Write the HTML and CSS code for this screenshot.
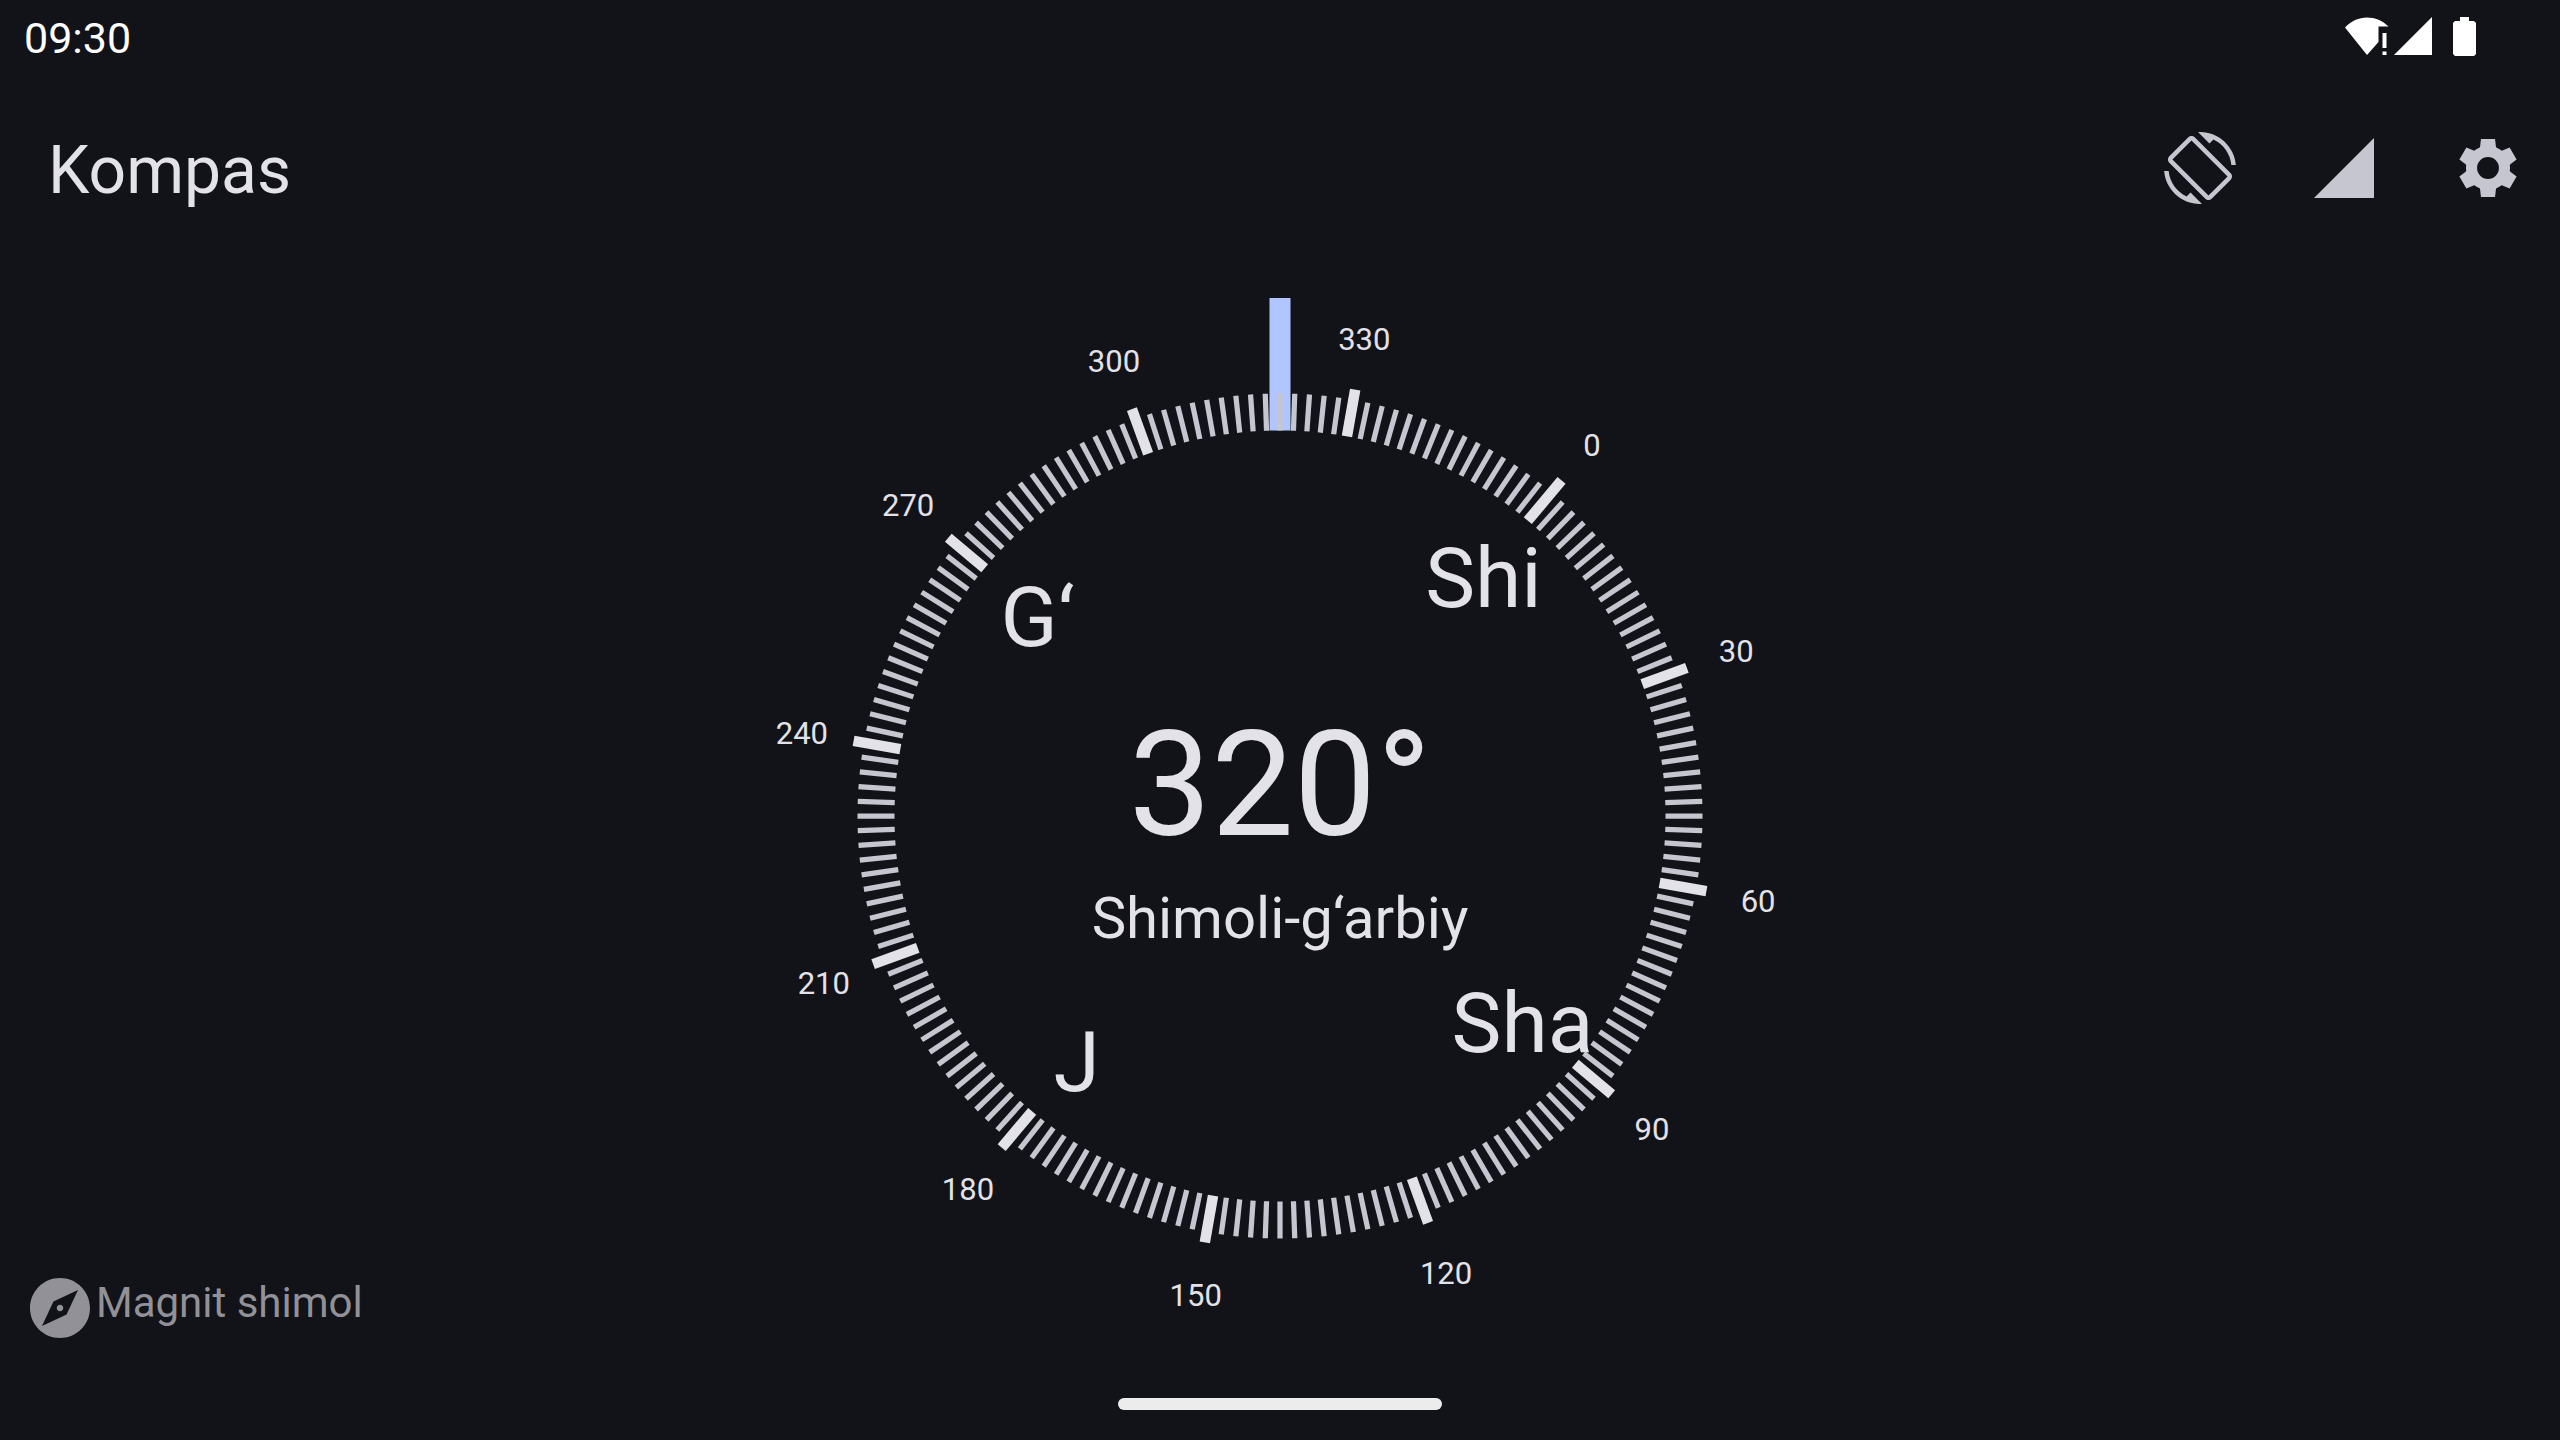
FILE: index.html
```html
<!DOCTYPE html>
<html lang="uz">
<head>
  <meta charset="utf-8">
  <meta name="viewport" content="width=device-width, initial-scale=1">
  <title>Kompas</title>
  <link rel="stylesheet" href="styles.css">
</head>
<body class="screen">
  <div class="status-bar">
    <time class="clock">09:30</time>
    <div class="status-icons">
      <svg class="status-wifi" viewBox="0 0 44 38" aria-hidden="true">
        <path d="M0 10.500C6 4 14 .5 22 .5S37.500 3.500 43.500 9.500H33.500V25L22 38Z"/>
        <path d="M37.500 16h4v15h-4zM37.500 34.500h4v3.500h-4z"/>
      </svg>
      <svg class="status-signal" viewBox="0 0 38 38" aria-hidden="true"><path d="M0 38H38V0Z"/></svg>
      <svg class="status-battery" viewBox="0 0 23 39" aria-hidden="true">
        <path d="M7 0h9v4h5l2 2v31l-2 2H2l-2-2V6l2-2h5z"/>
      </svg>
    </div>
  </div>

  <header class="app-bar">
    <h1 class="title">Kompas</h1>
    <div class="actions">
      <button class="action" type="button" aria-label="Ekranni burish">
        <svg class="icon" viewBox="0 0 24 24" aria-hidden="true">
          <path d="M16.480 2.520c3.270 1.550 5.610 4.720 5.970 8.480h1.500C23.440 4.840 18.290 0 12 0l-.66.03 3.810 3.810 1.330-1.320zm-6.250-.77c-.59-.59-1.540-.59-2.120 0L1.750 8.110c-.59.59-.59 1.540 0 2.120l12.020 12.020c.59.59 1.540.59 2.120 0l6.360-6.360c.59-.59.59-1.540 0-2.120L10.230 1.750zm4.600 19.440L2.810 9.170l6.360-6.360 12.020 12.020-6.360 6.360zm-7.310.29C4.250 19.940 1.910 16.760 1.550 13H.05C.56 19.160 5.710 24 12 24l.66-.03-3.810-3.810-1.330 1.320z"/>
        </svg>
      </button>
      <button class="action" type="button" aria-label="Sensor holati">
        <svg class="icon" viewBox="0 0 24 24" aria-hidden="true"><path d="M2 22h20V2z"/></svg>
      </button>
      <button class="action" type="button" aria-label="Sozlamalar">
        <svg class="icon" viewBox="-12 -12 24 24" aria-hidden="true">
          <defs><path id="tooth" d="M-2.330-9.670H2.330L2.800-6H-2.800Z"/></defs>
          <circle class="gear-body" r="5.500"/>
          <use href="#tooth"/>
          <use href="#tooth" transform="rotate(60)"/>
          <use href="#tooth" transform="rotate(120)"/>
          <use href="#tooth" transform="rotate(180)"/>
          <use href="#tooth" transform="rotate(240)"/>
          <use href="#tooth" transform="rotate(300)"/>
        </svg>
      </button>
    </div>
  </header>

  <main class="compass">
    <p class="north-type">
      <svg class="icon" viewBox="0 0 24 24" aria-hidden="true">
        <path d="M12 10.900c-.61 0-1.100.49-1.100 1.100s.49 1.100 1.100 1.100c.61 0 1.100-.49 1.100-1.100s-.49-1.100-1.100-1.100zM12 2C6.480 2 2 6.480 2 12s4.480 10 10 10 10-4.480 10-10S17.520 2 12 2zm2.190 12.190L6 18l3.810-8.190L18 6l-3.810 8.190z"/>
      </svg>
      <span>Magnit shimol</span>
    </p>
    <svg class="dial" viewBox="-552 -552 1104 1104" data-heading="320">
      <rect class="pointer" x="-10.500" y="-518" width="21" height="132.500"/>
      <g class="rose"></g>
      <text class="degrees" y="19">320°</text>
      <text class="direction" y="122">Shimoli-g‘arbiy</text>
    </svg>
  </main>

  <div class="nav-bar"><span class="nav-handle"></span></div>
  <script src="compass.js"></script>
</body>
</html>
```
FILE: styles.css
```css
* {
  box-sizing: border-box;
}

.screen {
  display: flex;
  flex-direction: column;
  min-height: 100vh;
  margin: 0;
  background: #121318;
  color: #e3e2e9;
  font-family: Roboto, sans-serif;
}

.status-bar {
  display: flex;
  align-items: center;
  justify-content: space-between;
  height: 72px;
  padding: 0 84px 0 24px;
  color: #fff;
}

.clock {
  padding-top: 4px;
  font-size: 43px;
  line-height: 48px;
}

.status-icons {
  display: flex;
  align-items: center;
  fill: currentColor;
}

.status-wifi {
  width: 44px;
  height: 38px;
}

.status-signal {
  width: 38px;
  height: 38px;
  margin-left: 5px;
}

.status-battery {
  width: 23px;
  height: 39px;
  margin-left: 21px;
}

.app-bar {
  display: flex;
  align-items: center;
  justify-content: space-between;
  height: 192px;
  padding-left: 48px;
}

.title {
  margin: 0;
  padding-top: 6px;
  font-size: 66px;
  font-weight: 400;
  line-height: 84px;
}

.actions {
  display: flex;
}

.action {
  display: grid;
  place-items: center;
  width: 144px;
  height: 144px;
  padding: 0;
  border: 0;
  background: none;
  color: #c6c6d0;
}

.icon {
  width: 72px;
  height: 72px;
  fill: currentColor;
}

.gear-body {
  fill: none;
  stroke: currentColor;
  stroke-width: 3.700;
}

.compass {
  display: grid;
  flex: 1;
  grid-template-columns: 1fr auto 1fr;
  min-height: 0;
}

.north-type {
  display: flex;
  align-items: flex-start;
  align-self: end;
  margin: 0;
  padding: 0 0 24px 24px;
  color: #919197;
  font-size: 42px;
  line-height: 62px;
}

.dial {
  width: calc(100vh - 336px);
  height: calc(100vh - 336px);
  overflow: visible;
  fill: #e3e2e9;
  text-anchor: middle;
}

.pointer {
  fill: #b1c5ff;
}

.tick {
  stroke: #c6c6d0;
  stroke-width: 5.250;
}

.tick-major {
  stroke: #e3e2e9;
  stroke-width: 10.500;
}

.mark {
  font-size: 31px;
}

.cardinal {
  font-size: 84px;
}

.degrees {
  font-size: 147px;
}

.direction {
  font-size: 58px;
}

.nav-bar {
  display: grid;
  place-items: center;
  height: 72px;
}

.nav-handle {
  width: 324px;
  height: 12px;
  border-radius: 6px;
  background: #ececec;
}
```
FILE: compass.js
```js
const SVG_NS = 'http://www.w3.org/2000/svg';
const dial = document.querySelector('.dial');
const rose = dial.querySelector('.rose');
const heading = Number(dial.dataset.heading);

const RING_INNER = 385.5;
const RING_OUTER = 422.5;
const MAJOR_OUTER = 433;
const NORTH_OUTER = 438;

function add(name, attributes, text) {
  const node = document.createElementNS(SVG_NS, name);
  for (const [key, value] of Object.entries(attributes)) {
    node.setAttribute(key, value);
  }
  if (text !== undefined) node.textContent = text;
  rose.append(node);
}

function tickEnd(degrees) {
  if (degrees === 0) return NORTH_OUTER;
  return degrees % 30 === 0 ? MAJOR_OUTER : RING_OUTER;
}

// Text stays upright: only its anchor moves round the dial.
function addLabel(className, degrees, radius, baseline, text) {
  const angle = (degrees - heading) * Math.PI / 180;
  add('text', {
    class: className,
    x: radius * Math.sin(angle),
    y: baseline - radius * Math.cos(angle)
  }, text);
}

for (let degrees = 0; degrees < 360; degrees += 2) {
  const major = degrees % 30 === 0;
  add('line', {
    class: major ? 'tick tick-major' : 'tick',
    y1: -RING_INNER,
    y2: -tickEnd(degrees),
    transform: `rotate(${degrees - heading})`
  });
  if (major) addLabel('mark', degrees, 485.5, 12, degrees);
}

['Shi', 'Sha', 'J', 'G‘'].forEach((name, index) => {
  addLabel('cardinal', index * 90, 316.5, 33, name);
});
```
